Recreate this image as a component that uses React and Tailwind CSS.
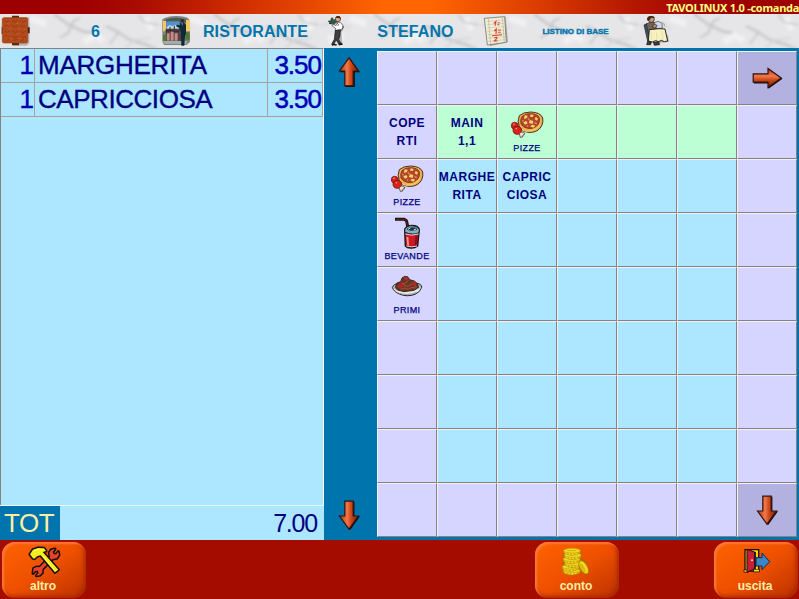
const Marble = () => (
  <svg className="absolute inset-0 h-full w-full" viewBox="0 0 160 34" preserveAspectRatio="none" aria-hidden="true">
    <defs>
      <filter id="soft" x="-20%" y="-20%" width="140%" height="140%"><feGaussianBlur stdDeviation="1.7" /></filter>
      <pattern id="veins" width="160" height="34" patternUnits="userSpaceOnUse">
        <rect width="160" height="34" fill="#e6e5e7" />
        <g filter="url(#soft)" fill="none" stroke="#c6c4c8">
          <path d="M84 28 94 22 104 26M30 4 46 10M146 4 152 16M8 26 24 22" strokeWidth="7" stroke="#f1f0f2" />
          <path d="M60 24 68 19 73 8 80 4" strokeWidth="2" />
          <path d="M54 0 66 9 82 17 92 19" strokeWidth="2.4" />
          <path d="M106 12 118 18 130 26 144 30 158 36" strokeWidth="2.4" />
          <path d="M118 19 110 30M138 0 144 8 158 11" strokeWidth="1.6" />
          <path d="M0 12 16 8 30 14M126 34 134 26 150 24" strokeWidth="2" stroke="#d8d7da" />
        </g>
      </pattern>
    </defs>
    <rect width="160" height="34" fill="url(#veins)" />
  </svg>
);

const TableIcon = () => (
  <svg className="h-[34px] w-[30px]" viewBox="0 42 90 102">
    <path d="M40 52h48v78l-8 7H40z" fill="#8f8c8e" opacity=".55" />
    <path d="M36 47h21v8H36zM36 128h21v8H36z" fill="#5a2a12" />
    <path d="M82 82h7v18h-7zM5 82h5v20H5z" fill="#3a1c0e" />
    <rect x="7" y="53" width="76" height="76" rx="5" fill="#b34a1c" stroke="#96400f" strokeWidth="2" />
    <path d="M14 62l6 4 8-3M36 62l9 4 8-5M62 61l7 5 8-4M13 78l8-3 7 5M34 76l10 5 9-4M61 75l8 6 7-4M14 93l7 5 9-6M38 92l8 6 9-6M62 94l8 4 7-5M13 109l9-4 7 6M36 108l9 5 10-5M63 107l7 6 8-4M20 122l9-4M40 121l12-3M62 122l10-3" fill="none" stroke="#9a3c13" strokeWidth="3" />
    <path d="M20 71l8 1M48 70l8 0M26 87l8-1M54 86l8 1M20 102l8 1M50 102l8-1M30 116l7 1M56 115l6 1M73 88l4 1" stroke="#c4602e" strokeWidth="3" />
  </svg>
);

const RestaurantIcon = () => (
  <svg className="h-[34px] w-[30px]" viewBox="480 42 90 102">
    <path d="M487 58Q500 49 528 48Q556 48 566 56L571 64V124L560 135H492L487 124z" fill="#7b8583" />
    <path d="M490 62Q506 53 528 53Q550 53 564 62V68H490z" fill="#4d5957" />
    <path d="M489 62h9v32h-9zM558 60h12v34h-12z" fill="#f3c95f" />
    <path d="M499 64h39v22h-39z" fill="#4f94cd" />
    <path d="M500 82l9-7 8 4 8-5 12 7v6h-37z" fill="#c5dbe6" />
    <path d="M497 86h50v38h-50z" fill="#514247" />
    <path d="M501 100h8v22h-8zM512 94h9v28h-9zM524 100h9v22h-9z" fill="#c98985" />
    <path d="M497 92l40 2M510 92v-12M523 90V77" stroke="#2c262c" strokeWidth="3" />
    <path d="M556 97h13v22h-13zM489 104h11v18h-11z" fill="#54762c" />
    <path d="M488 123h72v9h-66z" fill="#a1adaa" />
    <circle cx="547" cy="62" r="5" fill="#35251f" />
    <path d="M539 70l12-3 7 8v26l-3 8-2 28h-9l-1-39-5-14-10-5 3-5 9 2z" fill="#122838" />
    <path d="M544 69l3 10 2-11z" fill="#5f8fa9" />
  </svg>
);

const WaiterIcon = () => (
  <svg className="h-[34px] w-[30px]" viewBox="180 42 90 102">
    <path d="M231 90l13 3 3 41-10 3z" fill="#b4b2b4" />
    <path d="M205 63h8v-7l4-3 3 7 9-2 2 7-5 5h-15z" fill="#28614a" stroke="#102a22" strokeWidth="2" />
    <path d="M207 70l17 3" stroke="#343434" strokeWidth="3" />
    <circle cx="234" cy="57" r="8" fill="#e6a47c" stroke="#4d3027" strokeWidth="2" />
    <path d="M226 54q5-10 14-4l2 6-7-2z" fill="#38231d" />
    <path d="M218 73l10 4 5-11 9 2 8 10-4 14-19 2-1-10-10-6z" fill="#fff" stroke="#49494c" strokeWidth="2" />
    <path d="M231 68l4 5-1 5M248 77l2 7-10 7" fill="none" stroke="#222" strokeWidth="2" />
    <path d="M226 91l15-2-1 18-4 12 6 9 5 4-9 3-10-16-5 12-5 6-3-4 8-15z" fill="#404044" stroke="#111" strokeWidth="2" />
    <path d="M218 133l12 2M236 132l11 1" stroke="#141414" strokeWidth="4" />
  </svg>
);

const PriceListIcon = () => (
  <svg className="h-[34px] w-[30px]" viewBox="660 42 90 102">
    <path d="M679 56l58-6 7 76-54 13z" fill="#aaa8a9" />
    <path d="M673 55l61-5 5 77-57 8z" fill="#f0eed8" stroke="#77776d" strokeWidth="2.5" />
    <path d="M680 64l52-4M681 74l52-4M682 84l52-4M683 94l51-4M683 104l52-4M684 114l51-4M684 124l52-5" stroke="#c3c5b6" strokeWidth="2" />
    <path d="M685 56l7 76M727 52l6 75" stroke="#c2b080" strokeWidth="2" />
    <path d="M701 70l7-6-3 14M713 68h6M712 74h6M703 93l6-6-1 15M714 90h8M714 97h8M696 107l30-3M703 114q10-5 8 1l-8 8 10 0" fill="none" stroke="#e13b20" strokeWidth="3.2" />
  </svg>
);

const GuestIcon = () => (
  <svg className="h-[34px] w-[30px]" viewBox="330 42 90 102">
    <path d="M383 129l34-3-4-22zM394 63l10 8 3 12z" fill="#aaa8ab" />
    <path d="M342 75l9-4 10 48-8 4z" fill="#44536b" stroke="#161616" strokeWidth="2" />
    <path d="M349 72l15-7 12 4 6 12-4 14-22 8z" fill="#6b655c" stroke="#242424" strokeWidth="2" />
    <path d="M372 68l13-4 11 6 1 14-14 2-9-6z" fill="#cfdaea" stroke="#3c4653" strokeWidth="2" />
    <circle cx="364" cy="58" r="9" fill="#c99a78" stroke="#241812" strokeWidth="2" />
    <path d="M351 60q-1-13 13-12 9 0 11 7l-11-2-8 11z" fill="#402b20" />
    <path d="M366 79l9-8 7 7-9 7z" fill="#b9825f" stroke="#2b211c" strokeWidth="2" />
    <path d="M358 89l29-3 18 1 8 36-10 2-9-4-8 4-9-3-10 4-12-3z" fill="#f7f0c0" stroke="#292721" strokeWidth="3" />
    <path d="M366 96l-2 24M380 98v22M396 94l4 24" stroke="#e2d79e" strokeWidth="2" />
    <path d="M353 123l11 4-2 7H350zM370 127l16-2 3 9-16 2z" fill="#3b3d42" stroke="#111" strokeWidth="2" />
  </svg>
);

const turns = { up: "rotate-0", right: "rotate-90", down: "rotate-180" };
const shadows = {
  up: "translate(1 .8)",
  right: "translate(.8 -1)",
  down: "translate(-1 -.8)",
};

function Arrow({ dir }) {
  const flip = dir === "down";
  return (
    <svg className={`block h-8 w-8 ${turns[dir]}`} viewBox="0 0 32 32">
      <defs>
        <linearGradient id={`arrow-${dir}`} gradientUnits="userSpaceOnUse" x1={flip ? 24 : 8} y1="0" x2={flip ? 8 : 24} y2="0">
          <stop offset="0" stopColor="#b8431c" />
          <stop offset=".38" stopColor="#ee7a4c" />
          <stop offset=".6" stopColor="#d44a1c" />
          <stop offset="1" stopColor="#7c2408" />
        </linearGradient>
      </defs>
      <path d="M16 1.5 26 15.5h-5.2v14.6h-9.2V15.5H6z" transform={shadows[dir]} fill="#0c0c10" />
      <path d="M16 1.8 25.5 15h-5.3v14.8h-8.4V15H6.5z" fill={`url(#arrow-${dir})`} stroke="#33150f" strokeWidth="1.2" />
    </svg>
  );
}

const Pizza = () => (
  <svg className="block h-9 w-[58px]" viewBox="384 18 174 108">
    <path d="M448 47q12-11 34-11 30 1 36 18 3 20-10 33-13 12-35 10-18-2-25-16-7-18 0-34z" fill="#eeb04c" stroke="#4a3020" strokeWidth="3" />
    <path d="M456 50q10-10 27-9 20 1 25 13 2 16-9 25-12 9-26 6-15-3-20-13-3-12 3-22z" fill="#b5452a" stroke="#8a3a20" strokeWidth="3" />
    <path d="M464 46l9 1-2 7-9 3zM482 43l9 2-3 6-8-1zM497 51l7 4-3 7-7-4zM460 67l9-4 4 7-8 4zM479 60l11 3-2 9-11-3zM480 79l8-5 8 3-6 6z" fill="#f4d56a" />
    <path d="M456 61l5 2M474 55l4 5M493 68l8 3M474 76l-3 4" stroke="#e58a5e" strokeWidth="4" />
    <path d="M452 88q14 9 30 5 18-3 27-20" fill="none" stroke="#ffd27a" strokeWidth="3" />
    <ellipse cx="434" cy="77" rx="10" ry="10" fill="#d72318" stroke="#6a1610" strokeWidth="2.5" />
    <ellipse cx="442" cy="91" rx="13" ry="12" fill="#e02018" stroke="#6a1610" strokeWidth="2.5" />
    <path d="M430 73l4-1M437 87l4-2" stroke="#ff9683" strokeWidth="4" />
    <path d="M447 101l6-5q10-2 12 6l-6 3-1 6-7 1-2-6z" fill="#f2dcc1" stroke="#4a3a32" strokeWidth="2.5" />
  </svg>
);

const Drink = () => (
  <svg className="block h-9 w-[58px]" viewBox="24 12 174 108">
    <path d="M75 28h28q7 2 8 10l3 18" fill="none" stroke="#1d0c0f" strokeWidth="9" />
    <path d="M77 28h26q6 2 7 10l3 16" fill="none" stroke="#5c1d20" strokeWidth="4" />
    <path d="M104 58q6-12 22-12 18 0 22 12l-5 50q-9 7-21 6-11 0-16-6z" fill="#cc1822" stroke="#171014" strokeWidth="4" />
    <path d="M104 60q4-13 22-13 17 0 22 12l-1 9q-18 9-42-1z" fill="#7fb0c2" stroke="#17232b" strokeWidth="3" />
    <ellipse cx="126" cy="57" rx="15" ry="5" fill="#1d3440" />
    <path d="M114 58l7-4M131 60l7-3" stroke="#d5eaf0" strokeWidth="3" />
    <path d="M109 80l3 26 5 1-2-26z" fill="#f79a90" />
    <path d="M140 76l-4 32" stroke="#8a0d18" strokeWidth="6" />
    <path d="M106 72q18 7 40 0M109 108q14 5 32 0" fill="none" stroke="#d8d8dd" strokeWidth="3" />
  </svg>
);

const Pasta = () => (
  <svg className="block h-9 w-[58px]" viewBox="24 174 174 108">
    <path d="M67 232q4-10 16-12h58q14 2 14 12-4 14-20 21-24 9-47-1-17-7-21-20z" fill="#b9c1c0" stroke="#222526" strokeWidth="3" />
    <path d="M70 236q41 18 83-1l-10 11q-32 15-63 0z" fill="#e9ecea" />
    <path d="M76 232l5-13 11-4 4-11 8-5 9 1 6 9 14 4 9 8 4 11-14 9-30 4-20-5z" fill="#6f3324" stroke="#2c1914" strokeWidth="2.5" />
    <path d="M84 231q9-12 20-5t20-4q11 0 15 10M94 218q10 8 20-6M92 238q13-8 23 0 9-9 22-4" fill="none" stroke="#a9613f" strokeWidth="2.5" />
    <circle cx="108" cy="205" r="6" fill="#a3302a" /><circle cx="93" cy="227" r="7" fill="#b3231f" /><circle cx="133" cy="221" r="7" fill="#a52b24" />
    <path d="M82 248q28 11 58-1" fill="none" stroke="#8b9594" strokeWidth="2.5" />
  </svg>
);

const Tools = () => (
  <svg className="block h-9 w-12" viewBox="57 165 144 108">
    <path d="M101 238l9-4 9 1 31-32-2-12 6-9 11-2-7 9 3 7 8 0 6-8 2 10-7 10-12 2-31 31 0 10-8 8-10 1 7-8-3-7-7 0-7 8z" fill="#e8432a" stroke="#15100a" strokeWidth="9" strokeLinejoin="round" paintOrder="stroke" />
    <path d="M90 196l9-14 15-5 18 1 6 8-10 3 47 53-10 8-43-51-10 2-9 8-4-1z" fill="#f8ec1c" stroke="#15100a" strokeWidth="9" strokeLinejoin="round" paintOrder="stroke" />
    <path d="M101 186l12-5 15 2M126 199l40 46" fill="none" stroke="#fffa8a" strokeWidth="2.5" />
  </svg>
);

const Coins = () => (
  <svg className="block h-9 w-12" viewBox="99 45 144 108">
    <path d="M132 64q10-9 32-7l22 5 2 24 16 14 6 30-8 7-10-3-8-10-18 9-26-1-10-9z" fill="#a06a00" opacity=".6" />
    {[[158, 125], [155, 114], [162, 103], [158, 91], [161, 79], [159, 66]].map(([x, y]) => (
      <g key={y}>
        <path d={`M${x - 25} ${y - 1}v7q25 14 50 0v-7z`} fill="#d9b80a" stroke="#a98400" strokeWidth="1.5" />
        <path d={`M${x - 17} ${y + 4}v5M${x - 8} ${y + 6}v5M${x + 2} ${y + 7}v5M${x + 12} ${y + 5}v5`} stroke="#f7e23a" strokeWidth="3.5" />
        <ellipse cx={x} cy={y - 1} rx="25" ry="7" fill="#f2d926" stroke="#c39d06" strokeWidth="1.5" />
      </g>
    ))}
    <path d="M145 65h27" stroke="#d1ad09" strokeWidth="3" />
    <ellipse cx="194" cy="115" rx="11" ry="22" transform="rotate(-30 194 115)" fill="#f4d817" stroke="#a88200" strokeWidth="2.5" />
    <ellipse cx="191" cy="117" rx="5" ry="15" transform="rotate(-30 191 117)" fill="#dcb910" />
  </svg>
);

const Exit = () => (
  <svg className="block h-9 w-12" viewBox="636 45 144 108">
    <path d="M678 62h41v64h-41z" fill="#f0d51b" stroke="#171105" strokeWidth="4" />
    <path d="M686 69h25v52h-25z" fill="#28282d" />
    <path d="M674 126h14M703 125h19" stroke="#171105" strokeWidth="9" />
    <path d="M676 126h11M705 125h15" stroke="#f7dc26" strokeWidth="5" />
    <path d="M711 86h18V72l23 26-23 24V111h-18z" fill="#3a86cc" stroke="#17283b" strokeWidth="3" />
    <path d="M684 61l23 8v50l-23 11z" fill="#cb1f38" stroke="#250d15" strokeWidth="3" />
    <circle cx="699" cy="94" r="3" fill="#f9dfd0" />
  </svg>
);

const headers = [
  { icon: TableIcon, text: "6", size: "text-base" },
  { icon: RestaurantIcon, text: "RISTORANTE", size: "text-base tracking-[0.15px]" },
  { icon: WaiterIcon, text: "STEFANO", size: "text-base tracking-[0.1px]" },
  { icon: PriceListIcon, text: "LISTINO DI BASE", size: "text-[8px] [-webkit-text-stroke:0.4px_#0075ad]" },
  { icon: GuestIcon, text: "", size: "text-base" },
];

const orders = [
  { qty: 1, name: "MARGHERITA", price: "3.50", tracking: "tracking-[-0.25px]" },
  { qty: 1, name: "CAPRICCIOSA", price: "3.50", tracking: "tracking-[-0.45px]" },
];

const content = {
  "0-6": { arrow: "right" },
  "1-0": { lines: ["COPE", "RTI"] },
  "1-1": { lines: ["MAIN", "1,1"] },
  "1-2": { icon: Pizza, label: "PIZZE" },
  "2-0": { icon: Pizza, label: "PIZZE" },
  "2-1": { lines: ["MARGHE", "RITA"] },
  "2-2": { lines: ["CAPRIC", "CIOSA"] },
  "3-0": { icon: Drink, label: "BEVANDE" },
  "4-0": { icon: Pasta, label: "PRIMI" },
  "8-6": { arrow: "down" },
};

function tone(row, col) {
  if (col === 6 && (row === 0 || row === 8)) return "bg-[#b3b1df]";
  if (row === 0 || row === 8 || col === 0 || col === 6) return "bg-[#d5d5ff]";
  return row === 1 ? "bg-[#bcffd5]" : "bg-[#ade6ff]";
}

function Cell({ row, col }) {
  const item = content[`${row}-${col}`] || {};
  const Icon = item.icon;
  return (
    <button className={`flex h-[54px] w-[60px] flex-col items-center justify-center overflow-hidden border border-t-[#f1f1f1] border-r-[#848284] border-b-[#848284] border-l-[#f1f1f1] text-[#000080] ${tone(row, col)}`}>
      {item.arrow && <Arrow dir={item.arrow} />}
      {item.lines && item.lines.map((line) => (
        <span key={line} className="text-[12px] leading-[18px] font-bold tracking-[0.5px] whitespace-nowrap">{line}</span>
      ))}
      {Icon && <Icon />}
      {Icon && <span className="h-4 text-[9px] leading-[13px] tracking-[0.4px] [-webkit-text-stroke:0.25px_#000080]">{item.label}</span>}
    </button>
  );
}

function ActionButton({ icon: Icon, label }) {
  return (
    <button className="flex h-14 w-[84px] flex-col items-center rounded-[13px] bg-linear-to-br from-[#ff6300] via-[#ee5000] to-[#bb3000] pt-[2px] pr-[2px] shadow-[inset_2px_2px_2px_#f97a38,inset_-2px_-2px_4px_#a82800]">
      <Icon />
      <span className="text-[12px] leading-[13px] font-bold text-[#ffefa5]">{label}</span>
    </button>
  );
}

export default function App() {
  return (
    <div className="flex h-[599px] w-[799px] flex-col overflow-hidden bg-[#a40c00] font-['Liberation_Sans',Arial,sans-serif]">
      <div className="flex h-3.5 shrink-0 justify-end overflow-hidden bg-[linear-gradient(90deg,#9c0000_0%,#9e0000_10%,#a80c00_17%,#c01f00_25%,#d83600_33%,#ff6500_48%,#ff6500_54%,#d83a00_68%,#b81b00_78%,#9f0200_88%,#9c0000_100%)]">
        <span className="font-['Noto_Sans',sans-serif] text-[11px] leading-[15px] font-bold tracking-[-0.28px] whitespace-nowrap text-[#ffff84]">TAVOLINUX 1.0 -comanda</span>
      </div>

      <header className="flex h-[34px] shrink-0">
        {headers.map(({ icon: Icon, text, size }, i) => (
          <div key={i} className="relative flex w-40 shrink-0 items-center">
            <Marble />
            <div className="relative flex w-full items-center">
              <Icon />
              <span className={`flex-1 pt-px pl-px text-center font-bold whitespace-nowrap text-[#0075ad] ${size}`}>{text}</span>
            </div>
          </div>
        ))}
      </header>

      <main className="flex h-[492px] shrink-0 bg-[#0075ad]">
        <section className="flex w-[324px] flex-col bg-[#ade6ff]">
          <div className="h-[457px] border-t border-r border-l border-t-[#848284] border-r-white border-l-[#848284]">
            {orders.map((o) => (
              <div key={o.name} className="flex h-[34px] border-b border-[#a5a2a5] text-[26px] leading-[32px] text-[#000080]">
                <span className="w-[34px] border-r border-[#a5a2a5] text-right text-[#0000b5] [-webkit-text-stroke:0.4px_#0000b5]">{o.qty}</span>
                <span className={`w-[233px] border-r border-[#a5a2a5] pl-[3px] [-webkit-text-stroke:0.35px_#000080] ${o.tracking}`}>{o.name}</span>
                <span className="w-[55px] border-r border-[#a5a2a5] pr-px text-right tracking-[-1px] text-[#0000b5] [-webkit-text-stroke:0.5px_#0000b5]">{o.price}</span>
              </div>
            ))}
          </div>
          <div className="flex h-[35px] border-t border-[#e7f7ff] text-[26px] leading-[34px]">
            <span className="w-[60px] bg-[#0075ad] pl-[4px] tracking-[-0.5px] text-[#ffefa5]">TOT</span>
            <span className="flex-1 pr-[7px] text-right text-[25px] tracking-[-1.2px] text-[#000080]">7.00</span>
          </div>
        </section>

        <nav className="flex w-[53px] flex-col items-center justify-between pt-2 pr-[3px] pb-[9px]">
          <Arrow dir="up" />
          <Arrow dir="down" />
        </nav>

        <section className="grid grid-cols-[repeat(7,60px)] grid-rows-[repeat(9,54px)] pt-[3px]">
          {Array.from({ length: 63 }, (_, i) => (
            <Cell key={i} row={Math.floor(i / 7)} col={i % 7} />
          ))}
        </section>
      </main>

      <footer className="flex h-[59px] shrink-0 items-start pt-[2px] pl-[2px]">
        <ActionButton icon={Tools} label="altro" />
        <div className="w-[449px]" />
        <ActionButton icon={Coins} label="conto" />
        <div className="w-[95px]" />
        <ActionButton icon={Exit} label="uscita" />
      </footer>
    </div>
  );
}
